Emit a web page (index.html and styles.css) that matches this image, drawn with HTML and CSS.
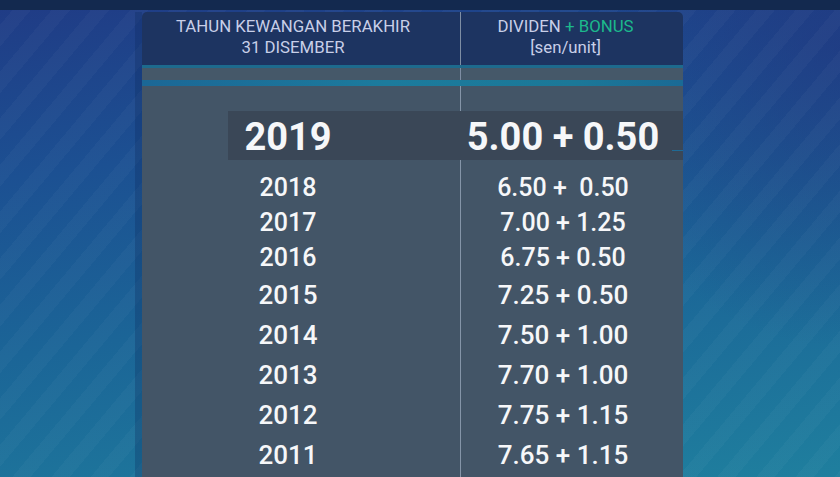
FILE: index.html
```html
<!DOCTYPE html>
<html lang="ms">
<head>
<meta charset="utf-8">
<title>Dividen + Bonus</title>
<link rel="stylesheet" href="styles.css">
</head>
<body>
<div class="topbar"></div>
<div class="stage">
  <div class="table">
    <div class="head">
      <div class="hcell hleft">TAHUN KEWANGAN BERAKHIR<br>31 DISEMBER</div>
      <div class="hcell hright">DIVIDEN <span class="bonus">+ BONUS</span><br>[sen/unit]</div>
    </div>
    <div class="strip"></div>
    <div class="band"></div>
    <div class="rows">
      <div class="current">
        <div class="cyear">2019</div>
        <div class="cval">5.00 + 0.50</div>
      </div>
      <div class="row tight"><div class="year">2018</div><div class="val">6.50 +&nbsp; 0.50</div></div>
      <div class="row tight"><div class="year">2017</div><div class="val">7.00 + 1.25</div></div>
      <div class="row tight"><div class="year">2016</div><div class="val">6.75 + 0.50</div></div>
      <div class="row"><div class="year">2015</div><div class="val">7.25 + 0.50</div></div>
      <div class="row"><div class="year">2014</div><div class="val">7.50 + 1.00</div></div>
      <div class="row"><div class="year">2013</div><div class="val">7.70 + 1.00</div></div>
      <div class="row"><div class="year">2012</div><div class="val">7.75 + 1.15</div></div>
      <div class="row"><div class="year">2011</div><div class="val">7.65 + 1.15</div></div>
    </div>
  </div>
</div>
</body>
</html>
```
FILE: styles.css
```css
html, body {
  margin: 0;
  height: 100%;
  overflow: hidden;
}
body {
  font-family: Roboto, "Noto Sans", "Liberation Sans", sans-serif;
  background:
    repeating-linear-gradient(130deg, rgba(255,255,255,0) 0px, rgba(255,255,255,0) 16px, rgba(255,255,255,0.028) 16px, rgba(255,255,255,0.028) 30px),
    radial-gradient(ellipse 260px 300px at 100% 10%, rgba(35,45,120,0.5), rgba(35,45,120,0)),
    linear-gradient(172deg, #203b85 0%, #1c5092 30%, #1b6597 60%, #1f7f9e 100%);
}
.topbar {
  height: 10px;
  background: #13294f;
}
.stage {
  padding-top: 2px;
  padding-left: 135px;
}
.table {
  width: 541px;
  height: 465px;
  overflow: hidden;
  border-left: 7px solid rgba(12, 40, 90, 0.28);
}
.head {
  display: grid;
  grid-template-columns: 318px 223px;
  height: 53px;
  background: #1d3461;
  border-bottom: 3px solid #1d6a8d;
  border-radius: 5px 5px 0 0;
  color: #c8cfe8;
  font-size: 16.8px;
  line-height: 21px;
}
.hcell {
  text-align: center;
  padding-top: 4px;
}
.hleft {
  padding-right: 16px;
}
.hright {
  border-left: 1px solid #7e8ea4;
  padding-right: 13px;
}
.bonus {
  color: #1cb98c;
}
.strip {
  height: 12px;
  background:
    linear-gradient(90deg, transparent 318px, #7e8ea4 318px, #7e8ea4 319px, transparent 319px),
    #455869;
}
.band {
  height: 6px;
  background: linear-gradient(90deg, #1b6796 0%, #1c7b9d 45%, #1b7898 80%, #1a6a95 100%);
}
.rows {
  padding-top: 25px;
  height: 366px;
  background:
    linear-gradient(90deg, transparent 318px, #8595a8 318px, #8595a8 319px, transparent 319px),
    #435567;
  color: #f6f7f9;
}
.current {
  position: relative;
  display: grid;
  grid-template-columns: 232px 223px;
  margin-left: 86px;
  height: 49px;
  margin-bottom: 10px;
  background: #3a4757;
  font-weight: 700;
  font-size: 38px;
  line-height: 53px;
}
.current::after {
  content: "";
  position: absolute;
  right: 0;
  top: 39px;
  width: 11px;
  height: 1px;
  background: #1f6a95;
}
.cyear {
  text-align: center;
  padding-right: 112px;
}
.cval {
  text-align: center;
  padding-right: 17px;
}
.row {
  display: grid;
  grid-template-columns: 318px 223px;
  height: 40px;
  line-height: 40px;
  font-size: 26px;
  font-weight: 500;
}
.row.tight {
  height: 35px;
  line-height: 35px;
  font-size: 25px;
}
.year {
  text-align: center;
  padding-right: 26px;
}
.val {
  text-align: center;
  padding-right: 17px;
  white-space: nowrap;
}
```
